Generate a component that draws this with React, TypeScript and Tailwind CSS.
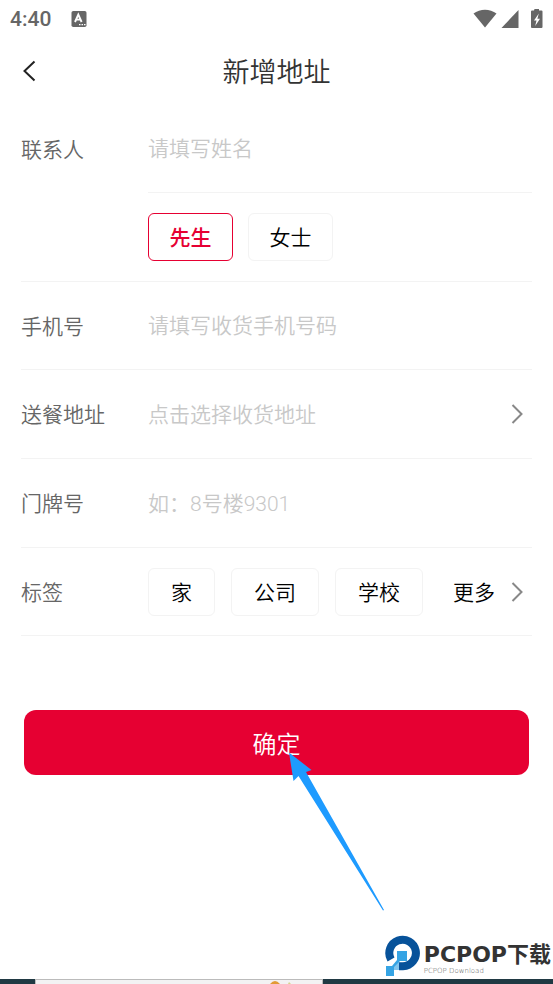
import type { ReactNode } from 'react'

const tags = ['家', '公司', '学校']

const inputClass =
  "h-full w-full min-w-0 bg-transparent pt-px font-[Roboto,'Noto_Sans_CJK_SC',sans-serif] text-[21px] text-[#333333] outline-none placeholder:text-[#c8c8c8] placeholder:opacity-100"

function ChevronRight() {
  return (
    <svg width="13" height="22" viewBox="0 0 13 22" fill="none" aria-hidden="true" className="shrink-0">
      <path d="M1.5 2 L10.5 11 L1.5 20" stroke="#888888" strokeWidth="2" />
    </svg>
  )
}

function StatusBar() {
  return (
    <div className="flex h-[38px] items-center justify-between px-[10px] text-[#666666]">
      <div className="flex items-center gap-5">
        <span className="font-[Roboto,sans-serif] text-[21px] leading-6 font-medium">4:40</span>
        <svg width="16" height="16" viewBox="0 0 16 16" aria-hidden="true">
          <rect x="0.5" y="0" width="15" height="16" rx="1.8" fill="#666666" />
          <path d="M4 11 L7.3 3.5 L10.6 11 M5.3 8.6 H9.3" fill="none" stroke="#ffffff" strokeWidth="1.9" />
          <path d="M8 13.6 h1.5 M10.5 13.6 h1.5 M13 13.6 h1.5" stroke="#ffffff" strokeWidth="1.3" />
        </svg>
      </div>
      <svg width="70" height="20" viewBox="0 0 70 20" fill="#666666" aria-hidden="true">
        <path d="M0.5 4.5 C7 -0.6 17 -0.6 23.5 4.5 L12 18.5 Z" />
        <path d="M45.5 1 V19 H28.5 Z" />
        <path d="M61.5 0 h4.5 v1.5 h2.5 q1 0 1 1 v15.5 q0 1 -1 1 h-9.5 q-1 0 -1 -1 v-15.5 q0 -1 1 -1 h2 z" />
        <path d="M65.8 4.5 L61 11.4 H63.5 L62.2 17 L67 9.8 H64.4 Z" fill="#ffffff" />
      </svg>
    </div>
  )
}

function Field({ label, htmlFor, height, children }: { label: string; htmlFor: string; height: string; children: ReactNode }) {
  return (
    <div className={`flex items-center border-b border-[#f3f3f3] ${height}`}>
      <label htmlFor={htmlFor} className="w-[127px] shrink-0 text-[21px] text-[#666666]">
        {label}
      </label>
      {children}
    </div>
  )
}

function Gender({ label, checked }: { label: string; checked?: boolean }) {
  return (
    <label className="relative flex h-12 w-[85px] cursor-pointer items-center justify-center rounded-md border border-[#f3f3f3] text-[21px] text-black has-checked:border-[#e60032] has-checked:font-medium has-checked:text-[#e60032]">
      <input type="radio" name="gender" defaultChecked={checked} className="sr-only" />
      {label}
    </label>
  )
}

function Arrow() {
  return (
    <svg width="96" height="160" viewBox="0 0 96 160" aria-hidden="true" className="pointer-events-none absolute left-1/2 top-[42px] ml-3">
      <path d="M0 0.5 L22.5 18 L17 20 L95 158 L94 158.5 L9.5 24 L4.5 29 Z" fill="#1e9bff" />
    </svg>
  )
}

function Watermark() {
  return (
    <div className="flex items-end justify-end gap-[3px] pr-[2px] text-[#333333]">
      <svg width="36" height="42" viewBox="0 0 36 42" aria-hidden="true">
        <path d="M6 24.5 A13.3 13.3 0 1 1 18 31.3 H14" fill="none" stroke="#07529a" strokeWidth="8" />
        <path d="M9 31 L14 24 V35 H9 Z" fill="#84c6ee" />
        <path d="M12 16 H22 V26 H15 L9 32 V41 H1 V31 H7 L12 25 Z" fill="#36a4e4" />
      </svg>
      <div className="flex flex-col pb-[2px]">
        <span className="whitespace-nowrap font-['DejaVu_Sans','Noto_Sans_CJK_SC',sans-serif] text-[22px] leading-6 font-bold">
          PCPOP下载
        </span>
        <span className="font-['DejaVu_Sans',sans-serif] text-[7px] leading-2 text-[#555555]">PCPOP Download</span>
      </div>
    </div>
  )
}

export default function App() {
  return (
    <div className="flex min-h-screen flex-col bg-white font-['Noto_Sans_CJK_SC',sans-serif] font-[350]">
      <StatusBar />
      <header className="grid h-[66px] grid-cols-[1fr_auto_1fr] items-center px-[22px]">
        <button type="button" aria-label="返回" className="justify-self-start">
          <svg width="14" height="22" viewBox="0 0 14 22" fill="none" className="block">
            <path d="M12.5 1.5 L2.5 11 L12.5 20.5" stroke="#222222" strokeWidth="2" />
          </svg>
        </button>
        <h1 className="text-[27px] leading-9 text-[#333333]">新增地址</h1>
      </header>

      <form className="flex flex-col">
        <div className="mx-[21px]">
          <div className="flex h-[89px] items-center">
            <label htmlFor="name" className="w-[127px] shrink-0 text-[21px] text-[#666666]">
              联系人
            </label>
            <div className="h-full grow border-b border-[#f3f3f3]">
              <input id="name" placeholder="请填写姓名" className={inputClass} />
            </div>
          </div>
          <div className="flex h-[89px] items-center gap-[15px] border-b border-[#f3f3f3] pl-[127px]">
            <Gender label="先生" checked />
            <Gender label="女士" />
          </div>
          <Field label="手机号" htmlFor="phone" height="h-[88px]">
            <input id="phone" type="tel" placeholder="请填写收货手机号码" className={inputClass} />
          </Field>
          <Field label="送餐地址" htmlFor="address" height="h-[89px]">
            <button id="address" type="button" className="flex h-full grow items-center justify-between pr-2 text-[21px] text-[#c8c8c8]">
              点击选择收货地址
              <ChevronRight />
            </button>
          </Field>
          <Field label="门牌号" htmlFor="door" height="h-[89px]">
            <input id="door" placeholder="如：8号楼9301" className={inputClass} />
          </Field>
          <Field label="标签" htmlFor="tag-0" height="h-[88px]">
            <div className="flex grow items-center gap-4">
              {tags.map((tag, i) => (
                <button key={tag} id={`tag-${i}`} type="button" className="h-12 rounded-md border border-[#f3f3f3] px-[22px] text-[21px] text-black">
                  {tag}
                </button>
              ))}
            </div>
            <button type="button" className="flex shrink-0 items-center gap-4 pr-2 text-[21px] text-black">
              更多
              <ChevronRight />
            </button>
          </Field>
        </div>

        <div className="relative mx-6 mt-[74px]">
          <button type="submit" className="h-[65px] w-full rounded-xl bg-[#e60032] text-2xl text-white">
            确定
          </button>
          <Arrow />
        </div>
      </form>

      <footer className="mt-auto">
        <Watermark />
        <div className="mt-[2px] flex h-[5px] bg-[#203943] pl-[35px]">
          <div className="flex w-[288px] justify-end border-x border-t border-[#bbbbbb] bg-[#f3f2f3] pr-[30px]">
            <svg width="30" height="4" viewBox="0 0 30 4" aria-hidden="true">
              <path d="M8 4 Q13 -2 18 4 Z" fill="#e29a35" />
              <path d="M26 4 L27 2 L29 4 Z" fill="#d8d58c" />
            </svg>
          </div>
        </div>
      </footer>
    </div>
  )
}
